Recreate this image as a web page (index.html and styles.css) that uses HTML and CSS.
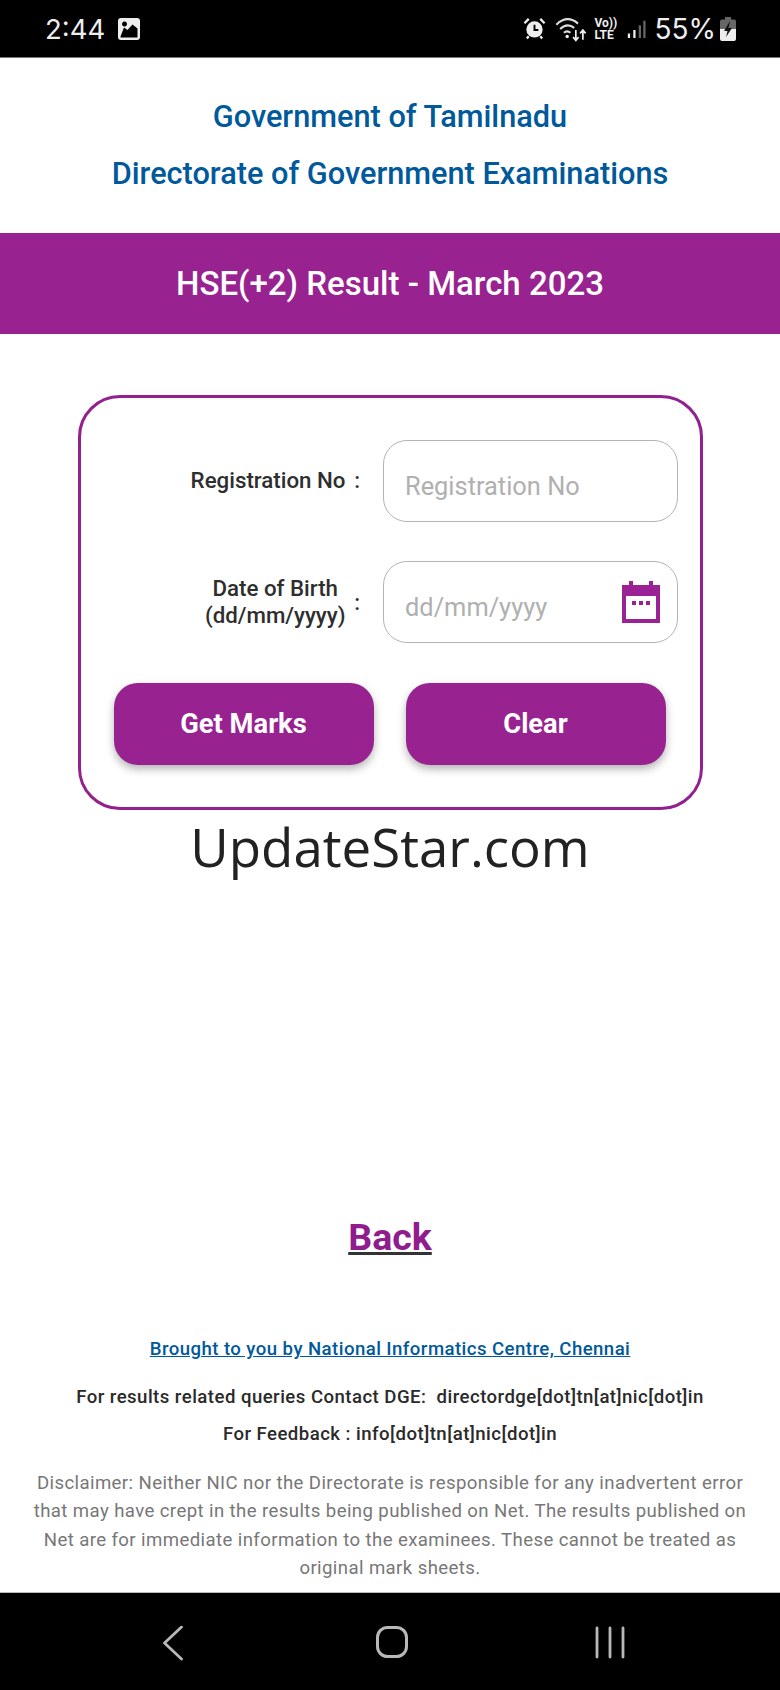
FILE: index.html
```html
<!DOCTYPE html>
<html lang="en">
<head>
<meta charset="utf-8">
<title>HSE(+2) Result - March 2023</title>
<link rel="stylesheet" href="styles.css">
</head>
<body>
<div class="phone">
  <header class="status">
    <div class="status-left">
      <span class="time">2:44</span>
      <svg class="ic-photo" viewBox="0 0 24 24"><path fill="#eee" fill-rule="evenodd" d="M4 1h16a3 3 0 0 1 3 3v16a3 3 0 0 1-3 3H4a3 3 0 0 1-3-3V4a3 3 0 0 1 3-3zM3.500 19.500V20.500H20.500V11.500L15.500 7.500 10.500 13 7 10.500zM7.500 4.500a2.500 2.500 0 1 0 .01 0z"/></svg>
    </div>
    <div class="status-right">
      <svg class="ic-alarm" viewBox="0 0 24 24"><circle cx="12" cy="13" r="8.500" fill="#eee"/><path d="M12 8v5.500h4" fill="none" stroke="#000" stroke-width="2"/><path d="M1.500 6.500 6 2M22.500 6.500 18 2M6 20l-2 2.500M18 20l2 2.500" stroke="#eee" stroke-width="2.400" fill="none"/></svg>
      <svg class="ic-wifi" viewBox="0 0 30 24"><path d="M1 8Q11-1.500 21 7M4.500 12Q11 6 17.500 11M8 15.500Q11 13 14 15.500" fill="none" stroke="#ddd" stroke-width="2"/><circle cx="11" cy="19" r="1.600" fill="#eee"/><path d="M19 13v9M16.500 19.500 19 22.500l2.500-3M25.500 22v-9M23 16l2.500-3 2.500 3" fill="none" stroke="#eee" stroke-width="1.600"/></svg>
      <div class="volte"><span>Vo))</span><span>LTE</span></div>
      <svg class="ic-signal" viewBox="0 0 22 24"><path d="M2 17h2.500v5H2zM8 13h2.500v9H8z" fill="#eee"/><path d="M14 8h2.500v14H14zM19 3h2.500v19H19z" fill="#666"/></svg>
      <span class="pct">55%</span>
      <svg class="ic-batt" viewBox="0 0 16 24"><path d="M5 0h6v2.500h3a2 2 0 0 1 2 2V12H0V4.500a2 2 0 0 1 2-2h3z" fill="#666"/><path d="M0 12h16v10a2 2 0 0 1-2 2H2a2 2 0 0 1-2-2z" fill="#eee"/><path d="M10 4 4 14h3.500L6 20l6-9H8.500z" fill="#111"/></svg>
    </div>
  </header>

  <main class="page">
    <div class="heads">
      <h1 class="head">Government of Tamilnadu</h1>
      <h2 class="head">Directorate of Government Examinations</h2>
    </div>
    <div class="banner">HSE(+2) Result - March 2023</div>

    <form class="card">
      <div class="row">
        <div class="label"><span class="label-text">Registration No</span></div>
        <div class="colon">:</div>
        <div class="field"><span class="ph ph-reg">Registration No</span></div>
      </div>
      <div class="row">
        <div class="label"><span class="label-text">Date of Birth<br>(dd/mm/yyyy)</span></div>
        <div class="colon">:</div>
        <div class="field">
          <span class="ph ph-dob">dd/mm/yyyy</span>
          <svg class="ic-cal" viewBox="0 0 38 42"><path fill="#9a2294" fill-rule="evenodd" d="M7 0h4v4h16V0h4v4h7v38H0V4h7zM4 15v23h30V15z"/><path fill="#9a2294" d="M10 20h4v4h-4zM17 20h4v4h-4zM24 20h4v4h-4z"/></svg>
        </div>
      </div>
      <div class="buttons">
        <button type="button" class="btn">Get Marks</button>
        <button type="button" class="btn">Clear</button>
      </div>
    </form>

    <div class="watermark">UpdateStar.com</div>

    <a class="back" href="#">Back</a>

    <footer class="foot">
      <a class="nic" href="#">Brought to you by National Informatics Centre, Chennai</a>
      <p class="contact contact-a">For results related queries Contact DGE:&nbsp; directordge[dot]tn[at]nic[dot]in</p>
      <p class="contact contact-b">For Feedback : info[dot]tn[at]nic[dot]in</p>
      <p class="disclaimer">Disclaimer: Neither NIC nor the Directorate is responsible for any inadvertent error that may have crept in the results being published on Net. The results published on Net are for immediate information to the examinees. These cannot be treated as original mark sheets.</p>
    </footer>
  </main>

  <nav class="navbar">
    <svg class="ic-nav ic-back" viewBox="0 0 24 36"><path d="M20.500 1 3.500 17 20.500 33" fill="none" stroke="#b8b8b8" stroke-width="2.800" stroke-linecap="round" stroke-linejoin="round"/></svg>
    <svg class="ic-nav ic-home" viewBox="0 0 34 36"><rect x="2.500" y="1.500" width="29" height="29" rx="10" fill="none" stroke="#b8b8b8" stroke-width="3"/></svg>
    <svg class="ic-nav ic-recent" viewBox="0 0 34 36"><path d="M4 2v29M17 2v29M30 2v29" fill="none" stroke="#b8b8b8" stroke-width="2.800" stroke-linecap="round"/></svg>
  </nav>
</div>
</body>
</html>
```
FILE: styles.css
```css
* { box-sizing: border-box; }
html, body { margin: 0; padding: 0; background: #fff; }
body { font-family: Roboto, "Liberation Sans", sans-serif; }

.phone { width: 780px; height: 1690px; display: flex; flex-direction: column; overflow: hidden; }

.status { height: 58px; flex: none; background: #000; border-bottom: 1px solid #777; color: #eee; display: flex; justify-content: space-between; align-items: center; padding: 0 44px 0 45px; }
.status-left, .status-right { display: flex; align-items: center; }
.time { font-family: Inter, Roboto, sans-serif; font-size: 27.500px; font-weight: 400; }
.ic-photo { width: 24px; height: 24px; margin-left: 12px; }
.ic-alarm { width: 23px; height: 23px; }
.ic-wifi { width: 35px; height: 26px; margin-left: 8px; }
.volte { display: flex; flex-direction: column; font-size: 12px; font-weight: 700; line-height: 12px; margin-left: 5px; width: 23px; }
.ic-signal { width: 20px; height: 24px; margin-left: 9px; }
.pct { font-family: Inter, Roboto, sans-serif; font-size: 28px; margin-left: 8px; }
.ic-batt { width: 16px; height: 24px; margin-left: 4px; }

.page { flex: 1; min-height: 0; display: flex; flex-direction: column; align-items: center; }
.heads { height: 175px; width: 100%; padding-top: 30px; }
.head { margin: 0; height: 57px; line-height: 57px; text-align: center; color: #00599b; font-size: 30.700px; font-weight: 500; }
.banner { width: 100%; height: 101px; background: #98228f; color: #fff; display: flex; align-items: center; justify-content: center; font-size: 33px; font-weight: 500; }

.card { width: 625px; height: 415px; margin-top: 61px; border: 3.500px solid #92208e; border-radius: 42px; padding: 42px 19px 0 33px; display: flex; flex-direction: column; gap: 40.500px; }
.row { display: flex; height: 81px; align-items: center; }
.label { width: 232px; display: flex; justify-content: flex-end; color: #2e2e2e; font-size: 22.300px; font-weight: 500; line-height: 27px; }
.label-text { text-align: center; }
.colon { width: 37.500px; padding-right: 14px; text-align: center; color: #2e2e2e; font-size: 22px; font-weight: 500; }
.field { width: 295px; height: 82px; border: 1.500px solid #b4b4b4; border-radius: 24px; display: flex; align-items: center; justify-content: space-between; padding: 0 17px 0 21px; }
.ph { color: #b0b0b0; font-size: 25.400px; }
.ph-reg { padding-top: 11px; }
.ph-dob { padding-top: 10px; }
.ic-cal { width: 38px; height: 42px; }
.buttons { display: flex; gap: 32px; }
.btn { width: 260px; height: 82px; border: 0; border-radius: 24px; background: #98228f; color: #fff; font-family: Roboto, sans-serif; font-size: 27.300px; font-weight: 700; box-shadow: 0 4px 8px rgba(0,0,0,.3); }

.watermark { font-family: "Open Sans", "Noto Sans", sans-serif; font-size: 52.800px; line-height: 76px; margin-top: -1px; color: #222; }

.back { margin-top: 331px; font-size: 37.500px; font-weight: 700; line-height: 42px; color: #8f1d8e; text-decoration-color: #333; }

.foot { width: 100%; margin-top: 79px; display: flex; flex-direction: column; align-items: center; text-align: center; }
.nic { color: #00599b; font-size: 18.600px; font-weight: 500; line-height: 24px; letter-spacing: .44px; }
.contact { margin: 0; color: #2a2a2a; font-size: 18.600px; font-weight: 500; line-height: 24px; letter-spacing: .46px; }
.contact-a { margin-top: 24px; }
.contact-b { margin-top: 13px; }
.disclaimer { margin: 23px 0 0; width: 730px; color: #777; font-size: 18.600px; line-height: 28.400px; letter-spacing: .4px; }

.navbar { height: 98px; flex: none; background: #000; border-top: 1px solid #bbb; display: flex; align-items: flex-start; padding-top: 33px; }
.ic-nav { height: 36px; width: 34px; }
.ic-back { width: 24px; margin-left: 161px; }
.ic-home { margin-left: 190px; }
.ic-recent { margin-left: 184px; }
```
